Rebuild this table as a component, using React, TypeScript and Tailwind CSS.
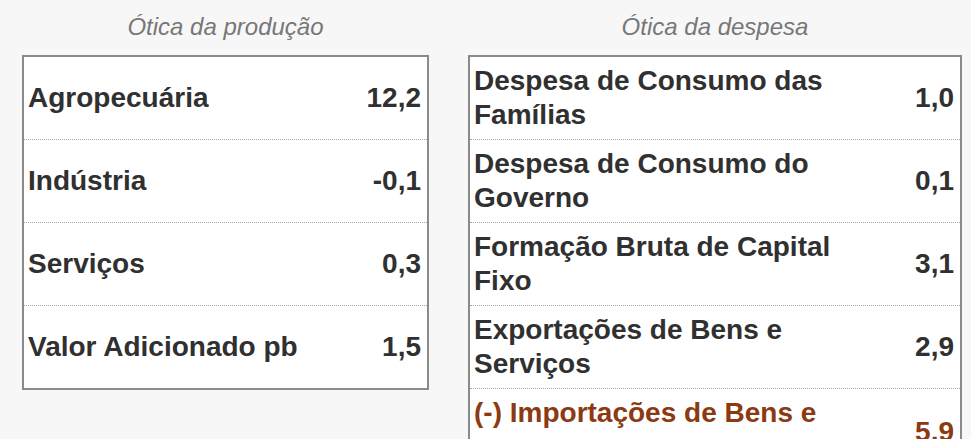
import React from "react";

type Row = { label: string; value: string; red?: boolean };

const left: Row[] = [
  { label: "Agropecuária", value: "12,2" },
  { label: "Indústria", value: "-0,1" },
  { label: "Serviços", value: "0,3" },
  { label: "Valor Adicionado pb", value: "1,5" },
];

const right: Row[] = [
  { label: "Despesa de Consumo das Famílias", value: "1,0" },
  { label: "Despesa de Consumo do Governo", value: "0,1" },
  { label: "Formação Bruta de Capital Fixo", value: "3,1" },
  { label: "Exportações de Bens e Serviços", value: "2,9" },
  { label: "(-) Importações de Bens e Serviços", value: "5,9", red: true },
];

function Table({ rows, labelW }: { rows: Row[]; labelW: string }) {
  return (
    <div className="border-2 border-[#8a8a8a] bg-white">
      {rows.map((r, i) => (
        <div
          key={i}
          className={
            "flex h-[82px] items-center pl-[4px] pr-[6px] " +
            (i > 0 ? "border-t border-dotted border-[#a8a8a8] h-[83px] " : "") +
            (r.red ? "pt-[3px] text-[#8b3a12]" : "text-[#303030]")
          }
        >
          <div
            className={
              labelW +
              " text-[28px] font-bold " +
              (r.red ? "leading-[38px]" : "leading-[34px]")
            }
          >
            {r.label}
          </div>
          <div className="flex-1 text-right text-[28px] font-bold leading-[34px]">{r.value}</div>
        </div>
      ))}
    </div>
  );
}

export default function App() {
  return (
    <div
      className="h-[439px] w-[971px] overflow-hidden bg-[#f7f7f7]"
      style={{ fontFamily: '"Liberation Sans", Arial, sans-serif' }}
    >
      <div className="flex gap-[39px] pl-[22px]">
        <div className="w-[407px]">
          <div className="h-[55px] pt-[13px] text-center text-[24px] italic leading-[28px] text-[#777777]">
            Ótica da produção
          </div>
          <Table rows={left} labelW="w-[320px]" />
        </div>
        <div className="w-[494px]">
          <div className="h-[55px] pt-[13px] text-center text-[24px] italic leading-[28px] text-[#777777]">
            Ótica da despesa
          </div>
          <Table rows={right} labelW="w-[400px]" />
        </div>
      </div>
    </div>
  );
}
